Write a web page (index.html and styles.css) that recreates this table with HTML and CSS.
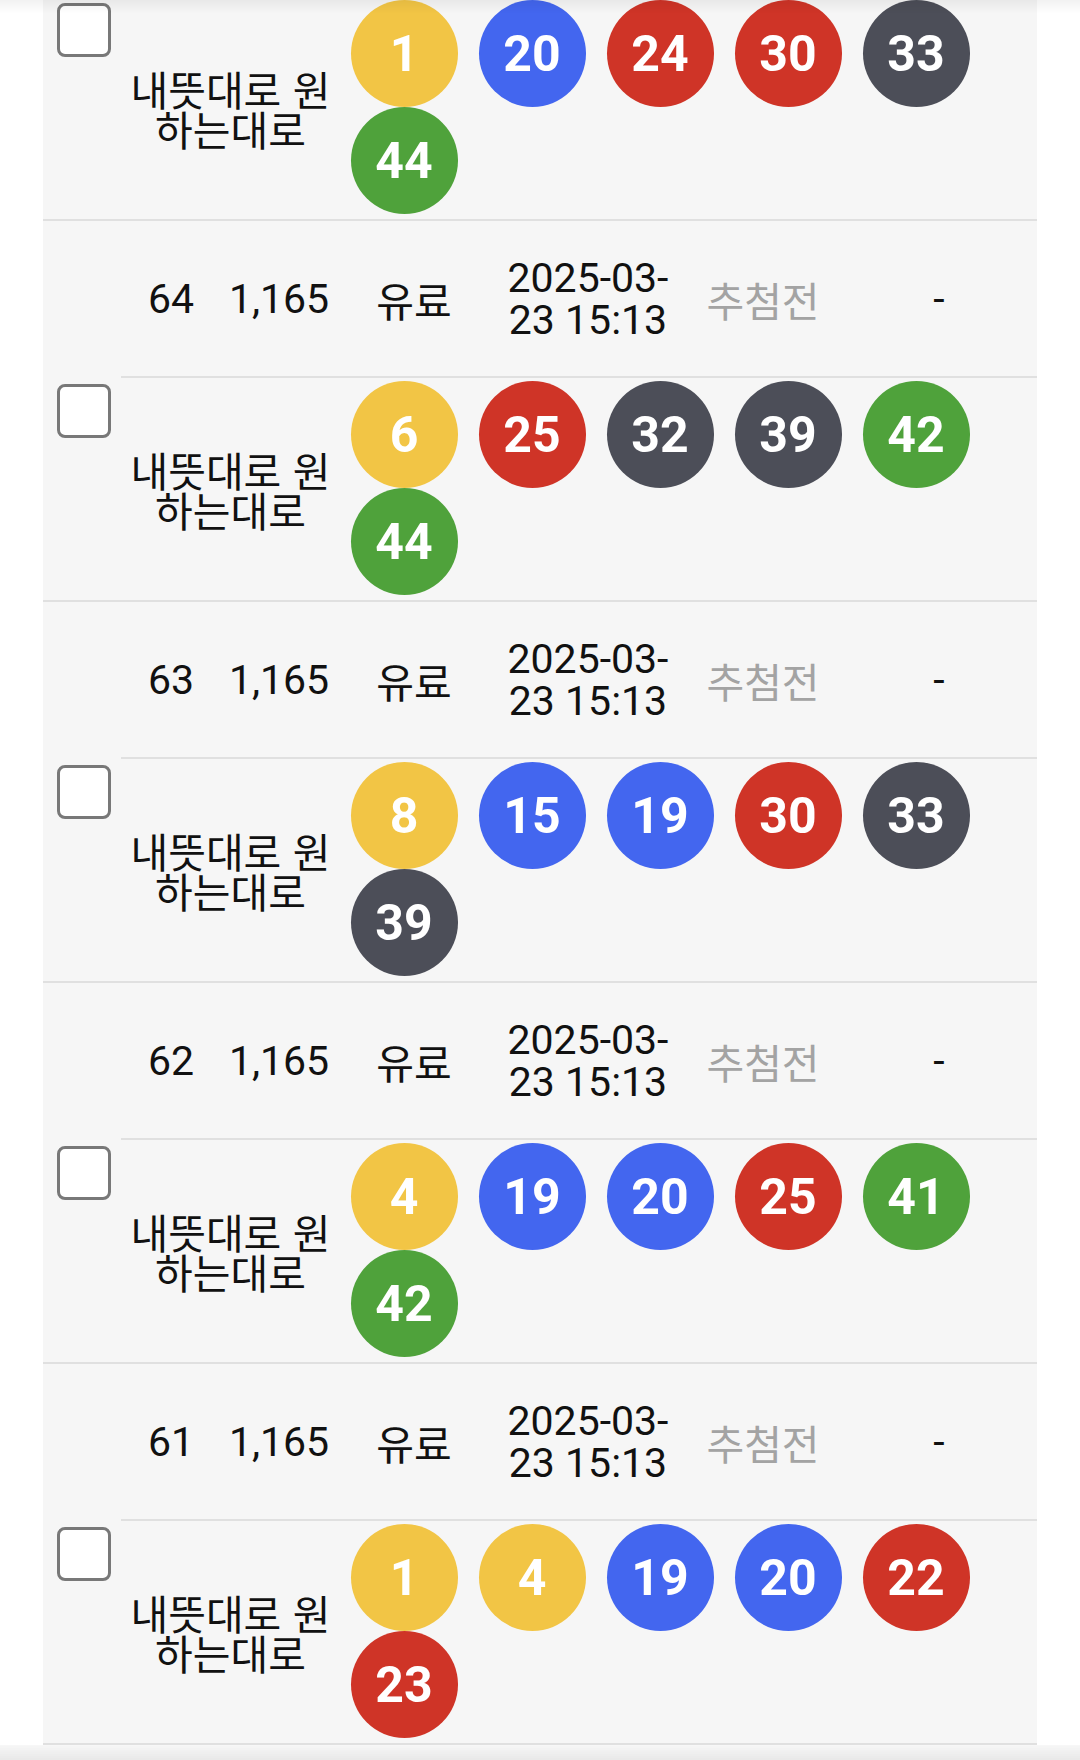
FILE: index.html
```html
<!DOCTYPE html>
<html lang="ko">
<head>
<meta charset="utf-8">
<title>구매 내역</title>
<link rel="stylesheet" href="styles.css">
</head>
<body>
<div class="list">
  <div class="group first">
    <div class="check"><span class="box"></span></div>
    <div class="pick">
      <div class="name">내뜻대로 원하는대로</div>
      <div class="balls">
        <span class="ball y">1</span><span class="ball b">20</span><span class="ball r">24</span><span class="ball r">30</span><span class="ball d">33</span><span class="ball g">44</span>
      </div>
    </div>
  </div>
  <div class="group">
    <div class="check"><span class="box"></span></div>
    <div class="info">
      <div class="num">64</div><div class="num">1,165</div><div class="ko">유료</div>
      <div class="num date">2025-03-<br>23 15:13</div><div class="ko muted">추첨전</div><div class="num">-</div>
    </div>
    <div class="pick">
      <div class="name">내뜻대로 원하는대로</div>
      <div class="balls">
        <span class="ball y">6</span><span class="ball r">25</span><span class="ball d">32</span><span class="ball d">39</span><span class="ball g">42</span><span class="ball g">44</span>
      </div>
    </div>
  </div>
  <div class="group">
    <div class="check"><span class="box"></span></div>
    <div class="info">
      <div class="num">63</div><div class="num">1,165</div><div class="ko">유료</div>
      <div class="num date">2025-03-<br>23 15:13</div><div class="ko muted">추첨전</div><div class="num">-</div>
    </div>
    <div class="pick">
      <div class="name">내뜻대로 원하는대로</div>
      <div class="balls">
        <span class="ball y">8</span><span class="ball b">15</span><span class="ball b">19</span><span class="ball r">30</span><span class="ball d">33</span><span class="ball d">39</span>
      </div>
    </div>
  </div>
  <div class="group">
    <div class="check"><span class="box"></span></div>
    <div class="info">
      <div class="num">62</div><div class="num">1,165</div><div class="ko">유료</div>
      <div class="num date">2025-03-<br>23 15:13</div><div class="ko muted">추첨전</div><div class="num">-</div>
    </div>
    <div class="pick">
      <div class="name">내뜻대로 원하는대로</div>
      <div class="balls">
        <span class="ball y">4</span><span class="ball b">19</span><span class="ball b">20</span><span class="ball r">25</span><span class="ball g">41</span><span class="ball g">42</span>
      </div>
    </div>
  </div>
  <div class="group">
    <div class="check"><span class="box"></span></div>
    <div class="info">
      <div class="num">61</div><div class="num">1,165</div><div class="ko">유료</div>
      <div class="num date">2025-03-<br>23 15:13</div><div class="ko muted">추첨전</div><div class="num">-</div>
    </div>
    <div class="pick">
      <div class="name">내뜻대로 원하는대로</div>
      <div class="balls">
        <span class="ball y">1</span><span class="ball y">4</span><span class="ball b">19</span><span class="ball b">20</span><span class="ball r">22</span><span class="ball r">23</span>
      </div>
    </div>
  </div>
</div>
<div class="shade-top"></div>
<div class="shade-bottom"></div>
</body>
</html>
```

FILE: styles.css
```css
html, body {
  margin: 0;
  padding: 0;
  background: #ffffff;
  overflow: hidden;
}

body {
  font-family: Roboto, "Noto Sans CJK KR", sans-serif;
  color: #111111;
}

.list {
  margin: -3px 43px 0 43px;
}

.group {
  display: grid;
  grid-template-columns: 78px 1fr;
  background: #f6f6f6;
  border-bottom: 2px solid #e0e0e0;
}

.check {
  grid-row: 1 / 3;
  display: flex;
  align-items: center;
  padding-left: 14px;
}

.group.first .check {
  grid-row: 1 / 2;
  align-items: flex-start;
  padding-top: 6px;
}

.box {
  width: 54px;
  height: 54px;
  box-sizing: border-box;
  border: 3px solid #787878;
  border-radius: 8px;
  background: #ffffff;
}

.info {
  display: grid;
  grid-template-columns: 100px 116px 154px 194px 156px 1fr;
  height: 155px;
  align-items: center;
  text-align: center;
  border-bottom: 2px solid #e0e0e0;
}

.num {
  font-family: Roboto, sans-serif;
  font-size: 41px;
  line-height: 42px;
  color: #111111;
}

.ko {
  font-family: "Noto Sans CJK KR", sans-serif;
  font-size: 41px;
  line-height: 42px;
  color: #111111;
}

.muted {
  color: #a3a3a3;
}

.pick {
  display: flex;
  height: 222px;
  box-sizing: border-box;
}

.name {
  width: 219px;
  flex: none;
  align-self: center;
  text-align: center;
  font-family: "Noto Sans CJK KR", sans-serif;
  font-size: 41px;
  line-height: 40px;
  color: #111111;
}

.balls {
  flex: 1;
  display: flex;
  flex-wrap: wrap;
  align-content: flex-start;
  padding-top: 3px;
}

.ball {
  width: 107px;
  height: 107px;
  margin: 0 10.5px;
  border-radius: 50%;
  display: flex;
  align-items: center;
  justify-content: center;
  color: #ffffff;
  font-family: Roboto, sans-serif;
  font-weight: 700;
  font-size: 50px;
  line-height: 1;
}

.y { background: #f2c545; }
.b { background: #4366ef; }
.r { background: #cf3427; }
.d { background: #4c4e58; }
.g { background: #4fa23b; }

.shade-top {
  position: fixed;
  left: 0;
  right: 0;
  top: 0;
  height: 14px;
  background: linear-gradient(to bottom, rgba(0, 0, 0, 0.05), rgba(0, 0, 0, 0));
  pointer-events: none;
}

.shade-bottom {
  position: fixed;
  left: 0;
  right: 0;
  bottom: 0;
  height: 15px;
  background: linear-gradient(to bottom, rgba(0, 0, 0, 0.03), rgba(0, 0, 0, 0.09));
  pointer-events: none;
}
```
